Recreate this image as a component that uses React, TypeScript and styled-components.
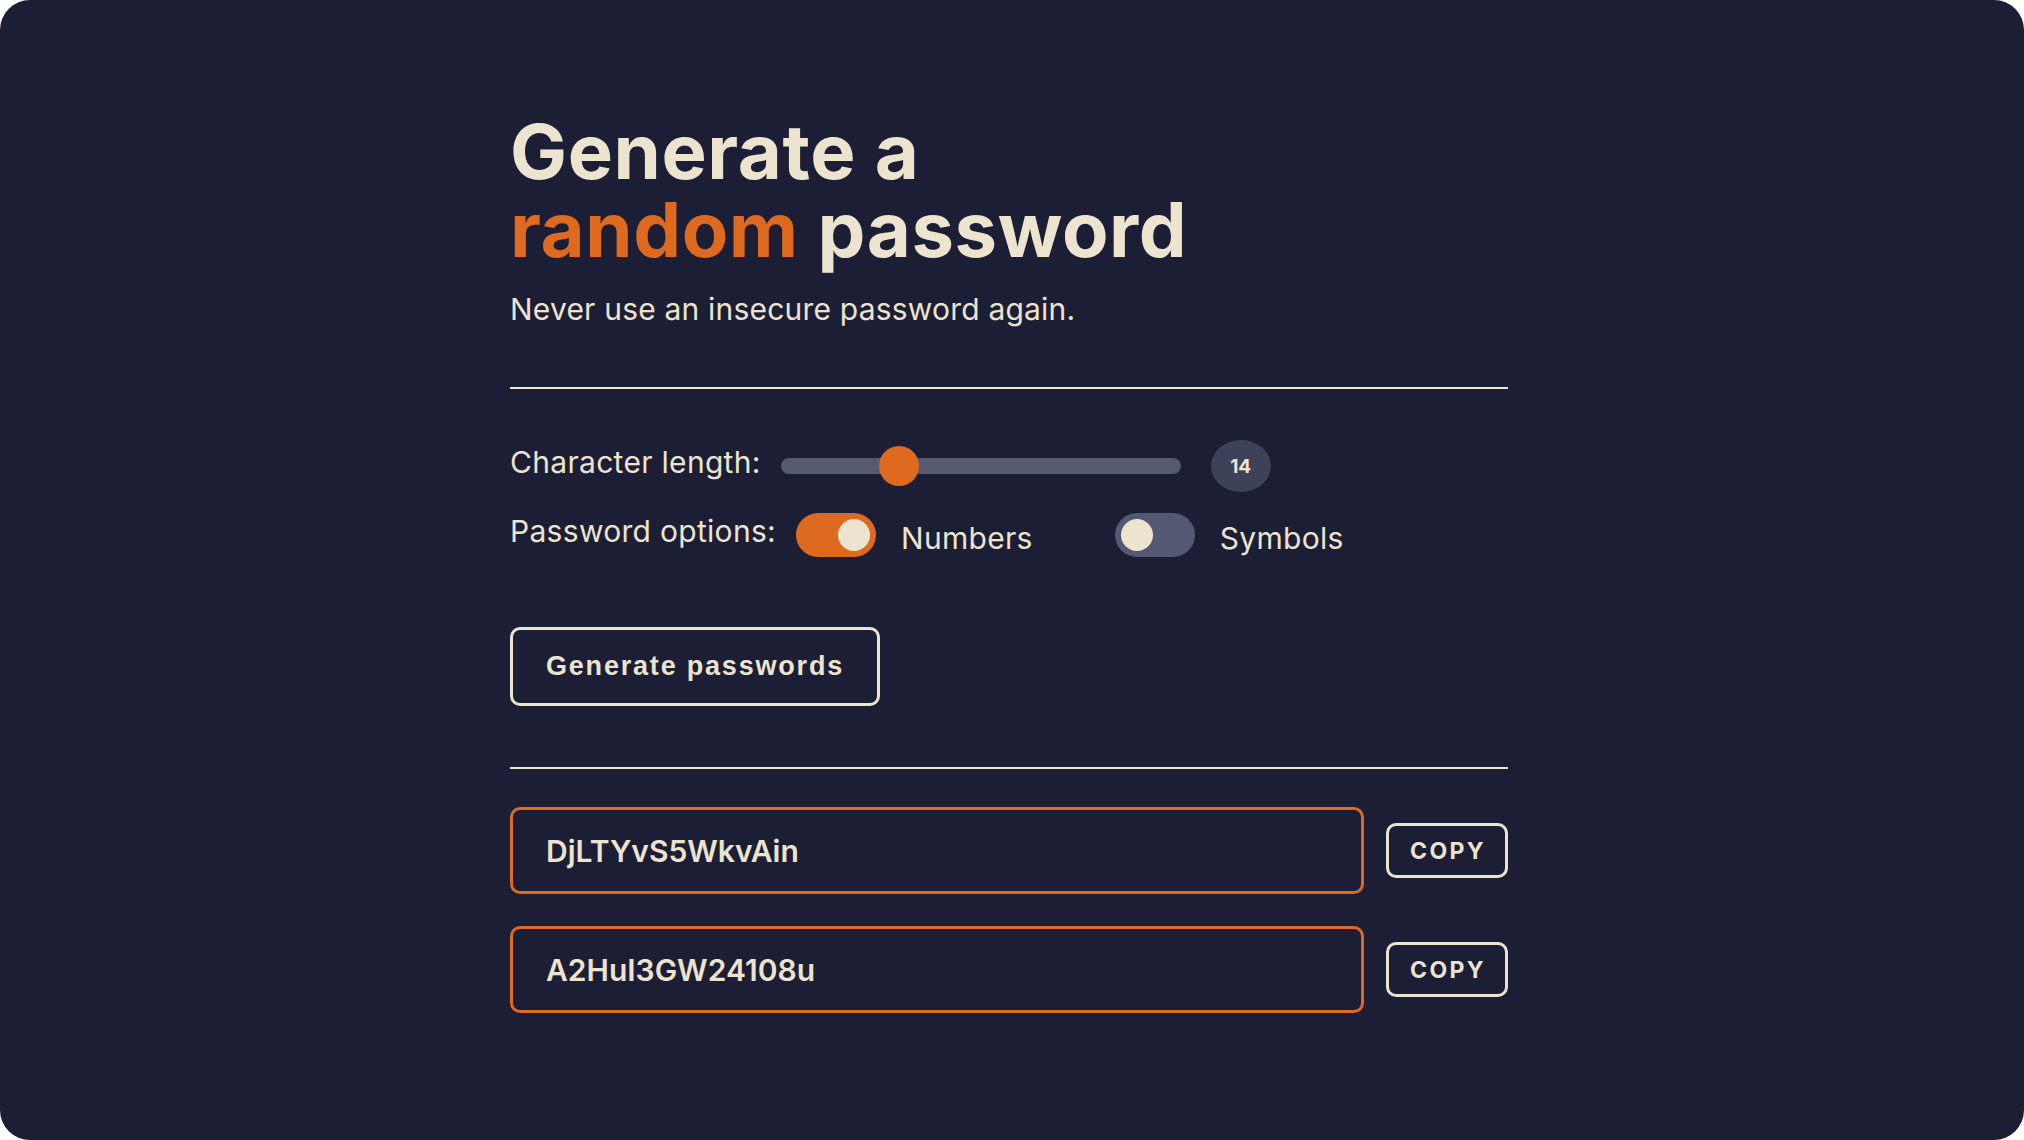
import React from 'react';
import styled, { createGlobalStyle } from "styled-components";

const GlobalStyle = createGlobalStyle`
  html, body { margin: 0; padding: 0; background: #ffffff; }
  * { box-sizing: border-box; }
`

const CREAM = '#ece4cf';
const ORANGE = '#dd6a1f';
const BG = '#1b1e35';

const Frame = styled.div`
  width: 2024px;
  height: 1140px;
  background: ${BG};
  border-radius: 30px;
  overflow: hidden;
  font-family: Inter, "Liberation Sans", sans-serif;
  color: ${CREAM};
`

const Content = styled.div`
  width: 998px;
  margin-left: 510px;
  padding-top: 112px;
  display: flex;
  flex-direction: column;
`

const Heading = styled.h1`
  margin: 0;
  font-size: 76px;
  line-height: 78px;
  font-weight: 700;
  letter-spacing: 0.6px;
  >span{color:${ORANGE};}
`

const Sub = styled.p`
  margin: 24px 0 0;
  font-size: 30px;
  line-height: 35px;
  font-weight: 400;
  letter-spacing: 0.2px;
`

const Divider = styled.hr<{ $top: number }>`
  margin: ${props => props.$top}px 0 0;
  border: none;
  height: 2px;
  background: ${CREAM};
  width: 100%;
`

const Row = styled.div<{ $top: number }>`
  display: flex;
  align-items: center;
  margin-top: ${props => props.$top}px;
`

const Label = styled.span`
  font-size: 30px;
  line-height: 35px;
  letter-spacing: 0.3px;
  margin-right: 20px;
  padding-bottom: 8px;
`

const Track = styled.div`
  position: relative;
  width: 400px;
  height: 16px;
  border-radius: 8px;
  background: #555a70;
`

const Thumb = styled.div`
  position: absolute;
  top: -12px;
  width: 40px;
  height: 40px;
  border-radius: 50%;
  background: ${ORANGE};
`

const Badge = styled.div`
  width: 60px;
  height: 52px;
  margin-left: 30px;
  border-radius: 50%;
  background: #3e4258;
  display: flex;
  align-items: center;
  justify-content: center;
  font-size: 19px;
  font-weight: 700;
`

const Switch = styled.div<{ $on: boolean }>`
  width: 80px;
  height: 44px;
  border-radius: 22px;
  padding: 6px;
  display: flex;
  justify-content: ${props => props.$on ? 'flex-end' : 'flex-start'};
  background: ${props => props.$on ? ORANGE : '#545870'};
  >.knob{width:32px;height:32px;border-radius:50%;background:${CREAM};}
`

const OptionText = styled.span<{ $gap: number }>`
  font-size: 30px;
  line-height: 35px;
  letter-spacing: 0.3px;
  margin-left: 25px;
  margin-right: ${props => props.$gap}px;
  padding-top: 6px;
`

const GenerateBtn = styled.button`
  margin-top: 70px;
  align-self: flex-start;
  width: 370px;
  height: 79px;
  background: transparent;
  border: 3px solid ${CREAM};
  border-radius: 10px;
  color: ${CREAM};
  font-family: "Liberation Sans", Arial, sans-serif;
  font-weight: 700;
  font-size: 27px;
  letter-spacing: 1.8px;
  padding: 0;
`

const Results = styled.div`
  margin-top: 38px;
  display: flex;
  flex-direction: column;
  gap: 32px;
`

const ResultRow = styled.div`
  display: flex;
  align-items: center;
  gap: 22px;
`

const Field = styled.div`
  width: 854px;
  height: 87px;
  border: 3px solid ${ORANGE};
  border-radius: 10px;
  display: flex;
  align-items: center;
  padding-left: 33px;
  font-size: 30px;
  font-weight: 600;
`

const CopyBtn = styled.button`
  width: 122px;
  height: 55px;
  background: transparent;
  border: 3px solid ${CREAM};
  border-radius: 10px;
  color: ${CREAM};
  font-family: Inter, "Liberation Sans", sans-serif;
  font-weight: 700;
  font-size: 23px;
  letter-spacing: 2.4px;
  padding: 0 0 0 2px;
`

const MIN = 8;
const MAX = 30;

const App = () => {
    const length = 14;
    const thumbLeft = ((length - MIN) / (MAX - MIN)) * (400 - 40);
    const passwords = ['DjLTYvS5WkvAin', 'A2HuI3GW24108u'];
    return (
        <Frame>
            <GlobalStyle/>
            <Content>
                <Heading>Generate a<br/><span>random</span> password</Heading>
                <Sub>Never use an insecure password again.</Sub>
                <Divider $top={60}/>
                <Row $top={51}>
                    <Label>Character length:</Label>
                    <Track>
                        <Thumb style={{left: thumbLeft}}/>
                    </Track>
                    <Badge>{length}</Badge>
                </Row>
                <Row $top={21}>
                    <Label>Password options:</Label>
                    <Switch $on={true}><div className={'knob'}/></Switch>
                    <OptionText $gap={82}>Numbers</OptionText>
                    <Switch $on={false}><div className={'knob'}/></Switch>
                    <OptionText $gap={0}>Symbols</OptionText>
                </Row>
                <GenerateBtn>Generate passwords</GenerateBtn>
                <Divider $top={61}/>
                <Results>
                    {passwords.map(p => (
                        <ResultRow key={p}>
                            <Field>{p}</Field>
                            <CopyBtn>COPY</CopyBtn>
                        </ResultRow>
                    ))}
                </Results>
            </Content>
        </Frame>
    );
};

export default App;
